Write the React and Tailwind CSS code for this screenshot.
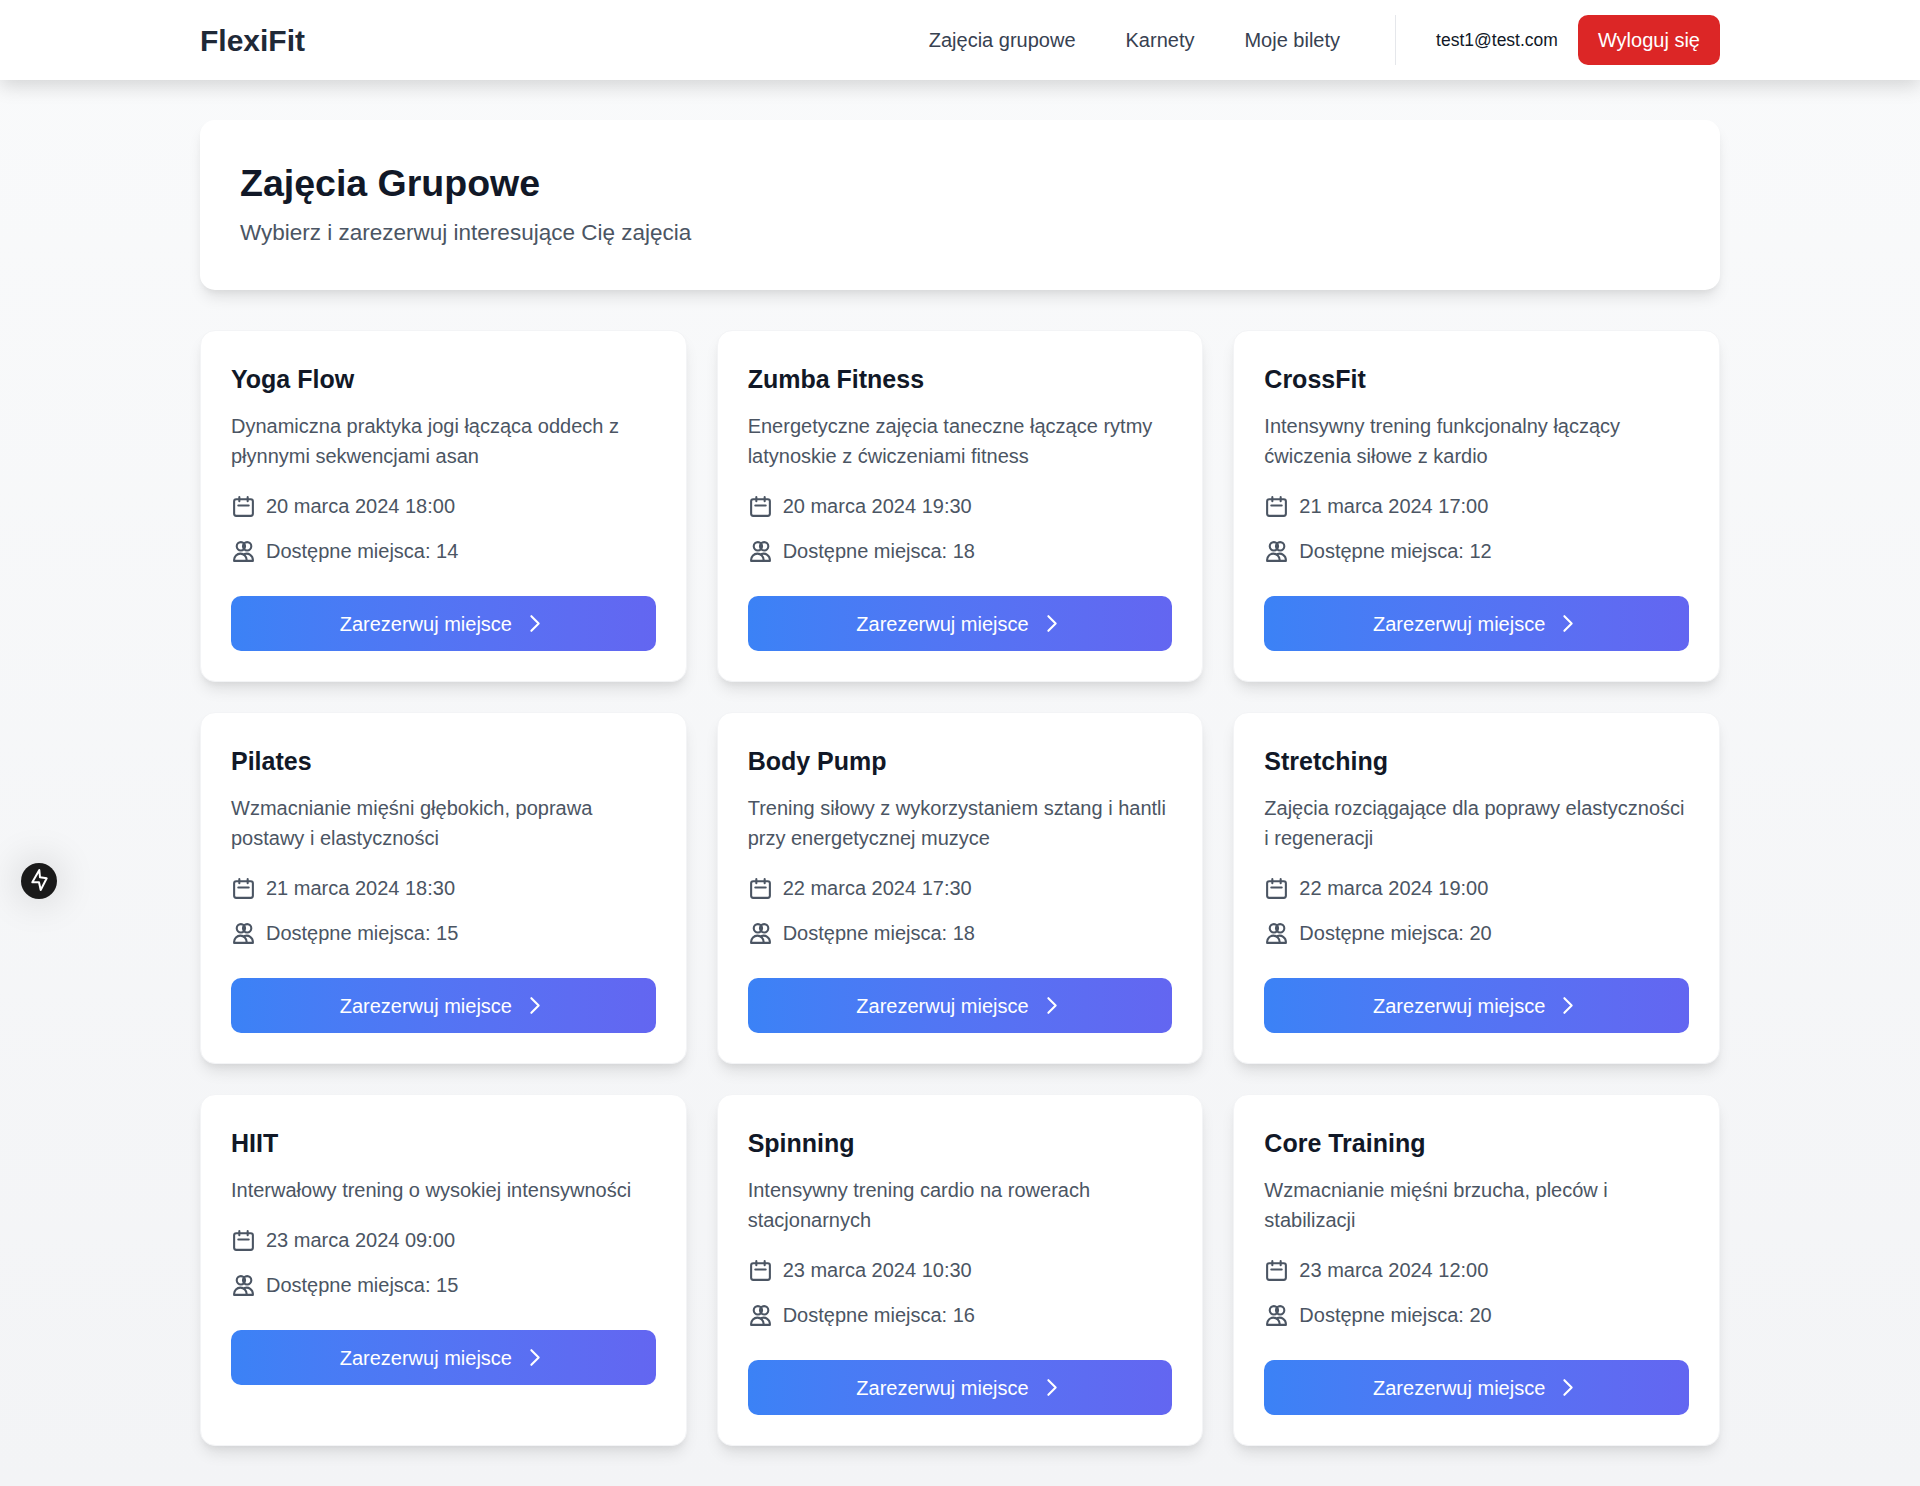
import React from "react";

const classes = [
  { name: "Yoga Flow", desc: "Dynamiczna praktyka jogi łącząca oddech z płynnymi sekwencjami asan", date: "20 marca 2024 18:00", seats: 14 },
  { name: "Zumba Fitness", desc: "Energetyczne zajęcia taneczne łączące rytmy latynoskie z ćwiczeniami fitness", date: "20 marca 2024 19:30", seats: 18 },
  { name: "CrossFit", desc: "Intensywny trening funkcjonalny łączący ćwiczenia siłowe z kardio", date: "21 marca 2024 17:00", seats: 12 },
  { name: "Pilates", desc: "Wzmacnianie mięśni głębokich, poprawa postawy i elastyczności", date: "21 marca 2024 18:30", seats: 15 },
  { name: "Body Pump", desc: "Trening siłowy z wykorzystaniem sztang i hantli przy energetycznej muzyce", date: "22 marca 2024 17:30", seats: 18 },
  { name: "Stretching", desc: "Zajęcia rozciągające dla poprawy elastyczności i regeneracji", date: "22 marca 2024 19:00", seats: 20 },
  { name: "HIIT", desc: "Interwałowy trening o wysokiej intensywności", date: "23 marca 2024 09:00", seats: 15 },
  { name: "Spinning", desc: "Intensywny trening cardio na rowerach stacjonarnych", date: "23 marca 2024 10:30", seats: 16 },
  { name: "Core Training", desc: "Wzmacnianie mięśni brzucha, pleców i stabilizacji", date: "23 marca 2024 12:00", seats: 20 },
];

const CalendarIcon = () => (
  <svg width="25" height="25" viewBox="0 0 24 24" fill="none" stroke="currentColor" strokeWidth="2" strokeLinecap="round" strokeLinejoin="round" className="shrink-0">
    <path d="M8 7V3m8 4V3m-9 8h10M5 21h14a2 2 0 002-2V7a2 2 0 00-2-2H5a2 2 0 00-2 2v12a2 2 0 002 2z" />
  </svg>
);

const UsersIcon = () => (
  <svg width="25" height="25" viewBox="0 0 24 24" fill="none" stroke="currentColor" strokeWidth="2" strokeLinecap="round" strokeLinejoin="round" className="shrink-0">
    <circle cx="9.5" cy="7" r="4" />
    <circle cx="15.5" cy="7" r="4" />
    <path d="M3 21v-1a6 6 0 0 1 12 0v1z" />
    <path d="M15 21h6v-1a6 6 0 0 0-8-5.6" />
  </svg>
);

const ChevronIcon = () => (
  <svg width="25" height="25" viewBox="0 0 24 24" fill="none" stroke="currentColor" strokeWidth="2" strokeLinecap="round" strokeLinejoin="round" className="shrink-0">
    <path d="M9 5l7 7-7 7" />
  </svg>
);

const ClassCard = ({ item }) => (
  <div className="bg-white rounded-[15px] border border-[#f3f4f6] p-[30px] shadow-[0_10px_15px_-3px_rgba(0,0,0,0.1),0_4px_6px_-2px_rgba(0,0,0,0.05)]">
    <h3 className="text-[25px] font-bold text-[#111827] leading-[37px] mb-[13px]">{item.name}</h3>
    <p className="text-xl leading-[30px] text-[#4b5563] mb-5">{item.desc}</p>
    <div className="flex items-center gap-[10px] text-xl leading-[30px] text-[#4b5563] mb-[15px]">
      <CalendarIcon />
      <span>{item.date}</span>
    </div>
    <div className="flex items-center gap-[10px] text-xl leading-[30px] text-[#4b5563] mb-[30px]">
      <UsersIcon />
      <span>Dostępne miejsca: {item.seats}</span>
    </div>
    <button className="h-[55px] w-full rounded-[10px] text-white text-xl flex items-center justify-center gap-[10px] bg-gradient-to-r from-[#3b82f6] to-[#6366f1]">
      Zarezerwuj miejsce
      <ChevronIcon />
    </button>
  </div>
);

export default function App() {
  return (
    <div className="min-h-screen bg-gradient-to-b from-[#f9fafb] to-[#f3f4f6] font-['Liberation_Sans',Arial,sans-serif]">
      <nav className="h-20 bg-white shadow-[0_6px_18px_rgba(0,0,0,0.15)] relative">
        <div className="w-[1520px] mx-auto h-full flex items-center justify-between">
          <span className="text-[30px] font-bold text-[#1f2937]">FlexiFit</span>
          <div className="flex items-center">
            <a className="text-xl text-[#374151] mr-[50px]">Zajęcia grupowe</a>
            <a className="text-xl text-[#374151] mr-[50px]">Karnety</a>
            <a className="text-xl text-[#374151]">Moje bilety</a>
            <div className="w-px h-[50px] bg-[#e5e7eb] ml-[55px] mr-[40px]" />
            <span className="text-[17.5px] text-[#111827] mr-5">test1@test.com</span>
            <button className="h-[50px] px-5 rounded-[10px] bg-[#dc2626] text-white text-xl">Wyloguj się</button>
          </div>
        </div>
      </nav>

      <main className="w-[1520px] mx-auto pt-10 pb-10">
        <div className="bg-white rounded-[15px] p-10 mb-10 shadow-[0_10px_15px_-3px_rgba(0,0,0,0.1),0_4px_6px_-2px_rgba(0,0,0,0.05)]">
          <h1 className="text-[37.5px] leading-[46px] font-bold text-[#111827] mb-[9px]">Zajęcia Grupowe</h1>
          <p className="text-[22.5px] leading-[35px] text-[#4b5563]">Wybierz i zarezerwuj interesujące Cię zajęcia</p>
        </div>

        <div className="grid grid-cols-3 gap-[30px]">
          {classes.map((item) => (
            <ClassCard key={item.name} item={item} />
          ))}
        </div>
      </main>

      {/* dev tools badge */}
      <div className="fixed left-[21px] top-[863px] w-9 h-9 rounded-full bg-[#1a1a1a] text-white shadow-[0_0_40px_rgba(0,0,0,0.2)]">
        <svg width="36" height="36" viewBox="0 0 36 36" fill="none" stroke="currentColor" strokeWidth="2" strokeLinejoin="round">
          <path d="M18.3 7L11.3 19.3H18L19.7 27L25.7 15.3L19 14.3z" />
        </svg>
      </div>
    </div>
  );
}
